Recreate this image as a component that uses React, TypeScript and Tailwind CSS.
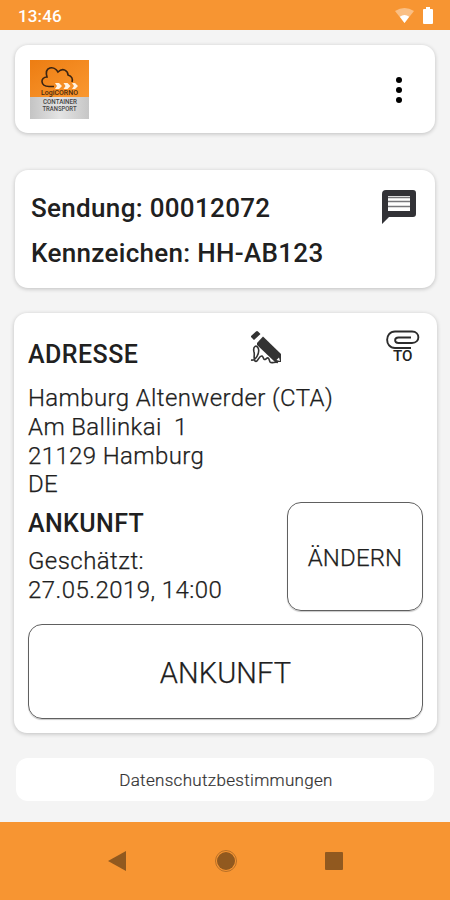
import React from 'react';

const card = 'bg-white rounded-[13px] shadow-[0_1px_4px_rgba(0,0,0,0.22)]';
const light = 'font-light [-webkit-text-stroke:0.25px_#202020]';

function StatusBar() {
  return (
    <header className="flex h-[30px] items-center justify-between bg-[#f79532] pl-[18px] pr-[17px] text-white">
      <span className="pt-[2px] text-[17px] font-medium leading-5 tracking-[0.15px]">13:46</span>
      <div className="flex items-center gap-[9px] pt-px">
        <svg width="19" height="16" viewBox="0 0 19 16">
          <path d="M0 3Q9.5-3 19 3L9.5 15Z" fill="#fff" opacity=".4" />
          <path d="M4.8 8.7Q9.5 5.5 14.2 8.7L9.5 15Z" fill="#fff" />
        </svg>
        <svg width="10" height="17" viewBox="0 0 10 17">
          <path d="M3 0H7V2H9Q10 2 10 3V16Q10 17 9 17H1Q0 17 0 16V3Q0 2 1 2H3Z" fill="#fff" />
        </svg>
      </div>
    </header>
  );
}

function Logo() {
  return (
    <svg width="59" height="59" viewBox="0 0 59 59" aria-label="Logo">
      <defs>
        <linearGradient id="orange" x1="0" y1="0" x2="1" y2="1">
          <stop stopColor="#ed7d12" />
          <stop offset="1" stopColor="#fa9830" />
        </linearGradient>
        <linearGradient id="silver">
          <stop stopColor="#c4c4c4" />
          <stop offset=".5" stopColor="#e4e4e4" />
          <stop offset="1" stopColor="#c6c6c6" />
        </linearGradient>
      </defs>
      <path d="M0 0H59V37H0Z" fill="url(#orange)" />
      <path d="M0 37H59V59H0Z" fill="url(#silver)" />
      <path d="M24 26.5H19C10 26.5 10 17 17 17C14 6.5 24 5 28 12C33 7 38 11 38 15C42 16 43 19 42 22" fill="none" stroke="#3a2413" strokeWidth="1.6" />
      <path d="M25 23H29L32 26L29 29H25L27 26ZM33.5 23H37.5L40.5 26L37.5 29H33.5L35.5 26ZM42 23H45L48 26L45 29H42L44 26Z" fill="#fff3e3" />
      <text x="11" y="35.2" fontSize="6.5" fontWeight="500" textLength="37" lengthAdjust="spacingAndGlyphs" fill="#4b2a0c">LogiCORNO</text>
      <text x="13" y="44" fontSize="8" fontWeight="500" textLength="34" lengthAdjust="spacingAndGlyphs" fill="#444">CONTAINER</text>
      <text x="12.5" y="51.4" fontSize="8" fontWeight="500" textLength="34" lengthAdjust="spacingAndGlyphs" fill="#444">TRANSPORT</text>
    </svg>
  );
}

function MessageIcon() {
  return (
    <svg width="35" height="34" viewBox="0 0 35 34">
      <path d="M4 0H31Q34 0 34 3V24Q34 27 31 27H7L0 34V4Q0 0 4 0Z" fill="#323236" />
      <path d="M6 6H28V21H6Z" fill="#fff" />
      <path d="M6 7.5H28M6 11.5H28M6 16.5H28" stroke="#77777a" strokeWidth="1.5" />
    </svg>
  );
}

function SignIcon() {
  return (
    <svg width="33" height="35" viewBox="0 0 33 35">
      <path d="M1 6L6 1.5Q7 .5 8 1.5L10.5 4L4 10L1 7Z" fill="#333" />
      <path d="M7 13L13 6.5L31 24V32H25L7 15Z" fill="#333" />
      <path d="M26.5 30L29 27.5L30 31Z" fill="#fff" />
      <path d="M1 30C6 31 9.5 23 8.5 19C7 14 2.5 16 4 22C5 25 3 28 5 31C8 33 9 25 12 26C14 27 13 31 16 29C19 26 19 30 20 32C22 34 25 31 28 32.5" fill="none" stroke="#333" strokeWidth="1.6" />
    </svg>
  );
}

function AttachmentIcon() {
  return (
    <svg width="34" height="34" viewBox="0 0 34 34" className="overflow-visible">
      <path d="M25 18H9C-1.5 18-1.5 1.5 9 1.5H26C34.5 1.5 34.5 13 26 13H12.5C8 13 8 7.5 12.5 7.5H25" fill="none" stroke="#2c2c2c" strokeWidth="1.9" />
      <text x="7" y="30.8" fontSize="14" fontWeight="500" textLength="19.5" lengthAdjust="spacingAndGlyphs" fill="#222">TO</text>
    </svg>
  );
}

export default function App() {
  return (
    <div className="flex h-[900px] w-[450px] flex-col overflow-hidden bg-[#f4f4f4] font-[Roboto,sans-serif] text-[#202020]">
      <StatusBar />
      <main className="flex h-[792px] flex-col">
        <section className={`${card} mx-[15px] mt-[15px] flex h-[88px] items-center justify-between pl-[15px] pr-[33px]`}>
          <div className="pt-px"><Logo /></div>
          <button className="flex flex-col gap-1 pt-[2px]" aria-label="Menü">
            <span className="size-1.5 rounded-full bg-black" />
            <span className="size-1.5 rounded-full bg-black" />
            <span className="size-1.5 rounded-full bg-black" />
          </button>
        </section>

        <section className={`${card} mx-[15px] mt-[37px] flex h-[118px] justify-between pl-4 pr-[18px] pt-[20px]`}>
          <h1 className="-mt-[4px] text-[26px] font-medium leading-[44.5px] tracking-[0.32px]">
            Sendung: 00012072<br />Kennzeichen: HH-AB123
          </h1>
          <MessageIcon />
        </section>

        <section className={`${card} ml-[14px] mr-[13px] mt-[25px] flex h-[420px] flex-col px-[14px] pt-[17px]`}>
          <div className="flex h-[54px] items-start">
            <h2 className="w-[222px] pt-[10px] text-[25px] font-medium leading-[30px] tracking-[0.45px]">ADRESSE</h2>
            <SignIcon />
            <span className="ml-auto mr-[3px]"><AttachmentIcon /></span>
          </div>
          <p className={`${light} whitespace-pre text-[24px] leading-[28.8px] tracking-[0.38px]`}>{'Hamburg Altenwerder (CTA)\nAm Ballinkai  1\n21129 Hamburg\nDE'}</p>
          <div className="mt-[3px] flex h-[109px] justify-between">
            <div className="pt-[6px]">
              <h2 className="text-[25px] font-medium leading-[32px] tracking-[0.4px]">ANKUNFT</h2>
              <p className={`${light} mt-[7px] text-[24px] leading-[28.8px] tracking-[0.45px]`}>Geschätzt:<br />27.05.2019, 14:00</p>
            </div>
            <button className={`${light} h-[109px] w-[136px] rounded-[14px] border border-[#606060] pt-[2px] text-[24px] tracking-[0.15px] shadow-[0_1px_1px_rgba(0,0,0,0.22)]`}>ÄNDERN</button>
          </div>
          <button className={`${light} mt-[13px] h-[95px] rounded-[14px] border border-[#606060] pt-[5px] text-[29px] tracking-[0.15px] shadow-[0_1px_1px_rgba(0,0,0,0.22)]`}>ANKUNFT</button>
        </section>

        <a className="mx-4 mt-[25px] flex h-[43px] items-center justify-center rounded-[12px] bg-white pl-[2px] pt-[3px] text-[17px] font-light tracking-[0.32px] text-[#333] [-webkit-text-stroke:0.2px_#333]">Datenschutzbestimmungen</a>
      </main>

      <nav className="flex h-[78px] justify-center gap-[87px] bg-[#f79532] pt-[28px]">
        <svg width="22" height="22" viewBox="0 0 22 22"><path d="M2 11L20 1V21Z" fill="#91591f" /></svg>
        <svg width="22" height="22" viewBox="0 0 22 22"><circle cx="11" cy="11" r="9" fill="#91591f" /><circle cx="11" cy="11" r="10.5" fill="none" stroke="#b87027" /></svg>
        <svg width="20" height="22" viewBox="0 0 20 22"><rect x="1" y="2" width="18" height="18" rx="1" fill="#91591f" /></svg>
      </nav>
    </div>
  );
}
